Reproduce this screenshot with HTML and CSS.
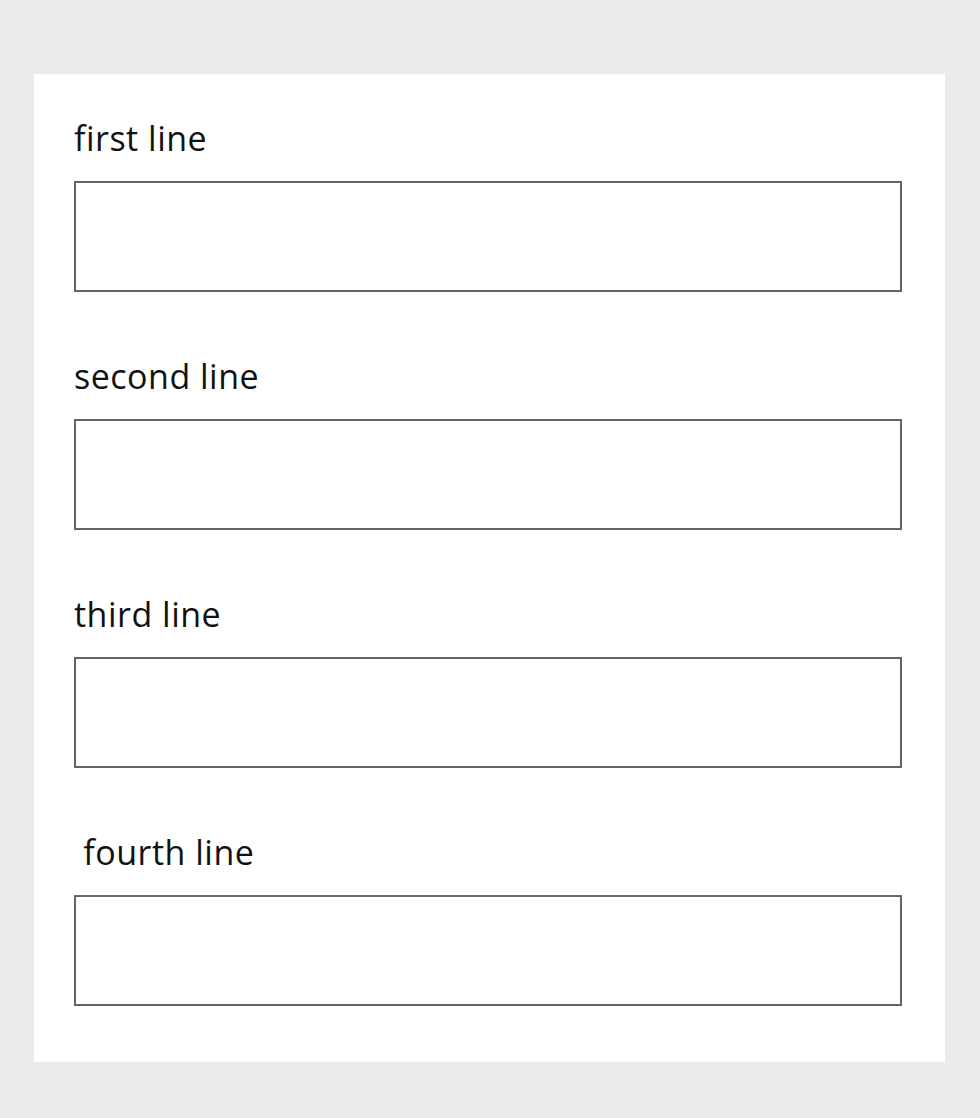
FILE: index.html
```html
<!DOCTYPE html>
<html lang="en">
<head>
    <meta charset="UTF-8">
    <meta name="viewport" content="width=device-width, initial-scale=1.0">
    <title>Lines</title>
    <link rel="stylesheet" href="styles.css">
</head>
<body>
    <form class="card">
        <div class="field">
            <label for="line-1">first line</label>
            <input type="text" id="line-1">
        </div>
        <div class="field">
            <label for="line-2">second line</label>
            <input type="text" id="line-2">
        </div>
        <div class="field">
            <label for="line-3">third line</label>
            <input type="text" id="line-3">
        </div>
        <div class="field">
            <label for="line-4">&nbsp;fourth line</label>
            <input type="text" id="line-4">
        </div>
    </form>
</body>
</html>
```

FILE: styles.css
```css
body {
    margin: 0;
    padding: 74px 35px 56px 34px;
    background-color: #ebebeb;
    font-family: 'Open Sans', Lato, sans-serif;
    color: #111;
}
.card {
    display: flex;
    flex-direction: column;
    gap: 64px;
    background-color: white;
    padding: 44px 43px 56px 40px;
}
.field label {
    display: block;
    font-size: 34px;
    line-height: 40px;
    letter-spacing: 0.5px;
    font-variant-ligatures: none;
}
.field input {
    display: block;
    box-sizing: border-box;
    width: 100%;
    height: 111px;
    margin: 23px 0 0;
    border: 2px solid #666;
    border-radius: 0;
    padding: 0 12px;
    font-size: 24px;
    font-family: inherit;
}
```
